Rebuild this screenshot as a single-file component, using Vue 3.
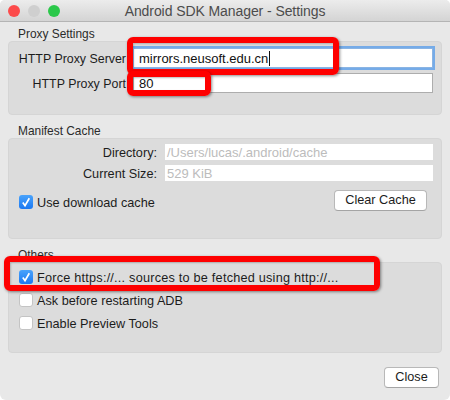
<script setup>
const others = [
  { label: 'Force https://... sources to be fetched using http://...', checked: true, wide: true },
  { label: 'Ask before restarting ADB', checked: false, wide: false },
  { label: 'Enable Preview Tools', checked: false, wide: false },
]
</script>

<template>
  <div class="window">
    <header class="titlebar">
      <div class="lights">
        <span class="light red"></span>
        <span class="light grey"></span>
        <span class="light green"></span>
      </div>
      <div class="title">Android SDK Manager - Settings</div>
    </header>

    <main class="content">
      <section class="group">
        <div class="legend">Proxy Settings</div>
        <div class="panel proxy-panel">
          <label class="row">
            <span class="label">HTTP Proxy Server</span>
            <span class="field focused">mirrors.neusoft.edu.cn<i class="caret"></i></span>
          </label>
          <label class="row">
            <span class="label">HTTP Proxy Port</span>
            <span class="field">80</span>
          </label>
        </div>
      </section>

      <section class="group spaced">
        <div class="legend">Manifest Cache</div>
        <div class="panel cache-panel">
          <div class="row cache-row">
            <span class="label">Directory:</span>
            <span class="readonly">/Users/lucas/.android/cache</span>
          </div>
          <div class="row cache-row">
            <span class="label">Current Size:</span>
            <span class="readonly">529 KiB</span>
          </div>
          <div class="cache-actions">
            <div class="check">
              <span class="box on">
                <svg viewBox="0 0 14 14" width="14" height="14"><path d="M3.8 7.6 6 10.6 10.3 3.2" fill="none" stroke="#fff" stroke-width="1.7"/></svg>
              </span>
              <span class="check-text">Use download cache</span>
            </div>
            <button class="btn clear">Clear Cache</button>
          </div>
        </div>
      </section>

      <section class="group spaced">
        <div class="legend">Others</div>
        <div class="panel others-panel">
          <div v-for="o in others" :key="o.label" class="check" :class="{ wide: o.wide }">
            <span class="box" :class="{ on: o.checked }">
              <svg v-if="o.checked" viewBox="0 0 14 14" width="14" height="14"><path d="M3.8 7.6 6 10.6 10.3 3.2" fill="none" stroke="#fff" stroke-width="1.7"/></svg>
            </span>
            <span class="check-text">{{ o.label }}</span>
          </div>
        </div>
      </section>

      <footer class="footer">
        <button class="btn close">Close</button>
      </footer>
    </main>

    <div class="mark mark-server"></div>
    <div class="mark mark-port"></div>
    <div class="mark mark-force"></div>
  </div>
</template>

<style scoped>
.window {
  position: relative;
  width: 450px;
  height: 400px;
  overflow: hidden;
  background: #e8e8e8;
  border-radius: 5px 5px 6px 6px;
  font-family: "Liberation Sans", Arial, sans-serif;
  font-size: 12.7px;
  color: #1c1c1c;
}
.titlebar {
  position: relative;
  height: 21px;
  border-bottom: 1px solid #b4b4b4;
  background: linear-gradient(#ececec, #d4d4d4);
  display: flex;
  align-items: center;
  justify-content: center;
}
.lights {
  position: absolute;
  left: 8px;
  top: 5px;
  display: flex;
  gap: 8px;
}
.light {
  width: 12px;
  height: 12px;
  border-radius: 50%;
}
.red { background: #fc4b4b; }
.grey { background: #cfcfcf; }
.green { background: #2bc84a; }
.title {
  padding-top: 1px;
  color: #4c4c4c;
  font-size: 14px;
  letter-spacing: -0.08px;
}
.content {
  padding: 0 8px;
}
.group {
  display: flex;
  flex-direction: column;
}
.spaced { margin-top: 4px; }
.legend {
  box-sizing: border-box;
  height: 19px;
  padding: 6px 0 0 10px;
  line-height: 13px;
  font-size: 11.9px;
  color: #2b2b2b;
}
.panel {
  box-sizing: border-box;
  background: #dcdcdc;
  border: 1px solid #d5d5d5;
  border-radius: 4px;
}
.proxy-panel {
  height: 74px;
  padding: 6px 8px 0 0;
  display: flex;
  flex-direction: column;
  gap: 5px;
}
.row {
  display: flex;
  align-items: center;
}
.label {
  padding-top: 1px;
}
.proxy-panel .label {
  width: 117px;
  font-size: 12.4px;
  text-align: right;
  white-space: nowrap;
}
.field {
  box-sizing: border-box;
  flex: 1;
  height: 20px;
  margin-left: 7px;
  padding-left: 5px;
  line-height: 20px;
  font-size: 13px;
  background: #fff;
  border: 1px solid #adadad;
  white-space: nowrap;
  color: #111;
}
.focused {
  border-color: #8ab4e3;
  box-shadow: 0 0 0 2px #75abe8;
}
.caret {
  display: inline-block;
  width: 1px;
  height: 15px;
  margin-left: 1px;
  vertical-align: -3px;
  background: #111;
}
.cache-panel {
  height: 101px;
  padding: 5px 8px 0 0;
}
.cache-row {
  height: 16px;
  margin-bottom: 5px;
}
.cache-row .label {
  width: 148px;
  text-align: right;
}
.readonly {
  flex: 1;
  height: 16px;
  margin-left: 8px;
  padding-left: 2px;
  line-height: 17px;
  font-size: 13px;
  background: #fff;
  color: #bcbcbc;
}
.cache-actions {
  display: flex;
  align-items: center;
  justify-content: space-between;
  margin-top: 9px;
  padding-left: 10px;
  padding-right: 6px;
}
.cache-actions .check { margin-top: 3px; }
.check {
  display: flex;
  align-items: center;
  gap: 4px;
  height: 14px;
  white-space: nowrap;
}
.check-text { padding-top: 1px; }
.wide { letter-spacing: 0.22px; }
.box {
  box-sizing: border-box;
  width: 14px;
  height: 14px;
  flex: none;
  display: block;
  background: #fff;
  border: 1px solid #c4c4c4;
  border-radius: 3px;
}
.box.on {
  border: 0;
  background: linear-gradient(#4aa3fb, #1a78f2);
}
.box svg { display: block; }
.btn {
  box-sizing: border-box;
  height: 21px;
  padding: 0 0 1px;
  background: #fff;
  border: 1px solid #b8b8b8;
  border-bottom-color: #a4a4a4;
  border-radius: 4px;
  font: inherit;
  color: #1c1c1c;
}
.clear { width: 93px; }
.close { width: 55px; }
.others-panel {
  height: 91px;
  padding: 7px 0 0 10px;
  display: flex;
  flex-direction: column;
  gap: 9px;
}
.footer {
  display: flex;
  justify-content: flex-end;
  padding: 14px 3px 0 0;
}
.mark {
  position: absolute;
  box-sizing: border-box;
  border: 6px solid #fe0000;
  border-radius: 6px;
  box-shadow: 1px 1px 3px rgba(0, 0, 0, 0.45), inset 1px 1px 2px rgba(0, 0, 0, 0.2);
}
.mark-server { left: 127px; top: 37px; width: 212px; height: 38px; }
.mark-port { left: 127px; top: 71px; width: 84px; height: 25px; }
.mark-force { left: 4px; top: 256px; width: 376px; height: 35px; }
</style>

<style>
html, body { margin: 0; background: #fff; }
</style>
